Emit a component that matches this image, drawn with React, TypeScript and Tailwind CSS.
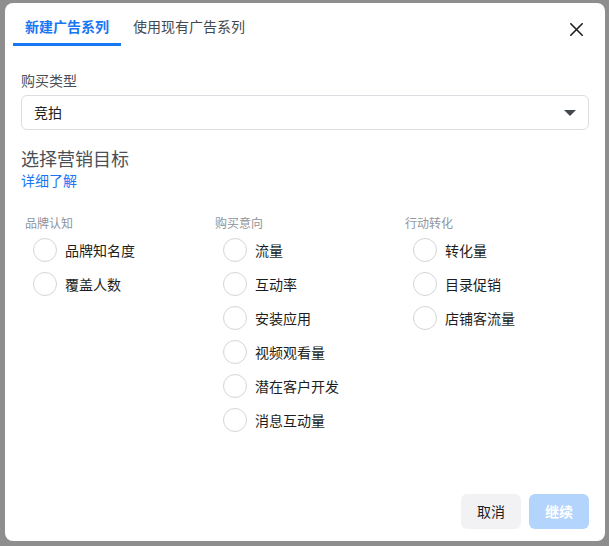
import React from "react";

const font = { fontFamily: '"Noto Sans CJK SC", "Noto Sans", "Liberation Sans", sans-serif' };

type Col = { title: string; items: string[] };

const cols: Col[] = [
  { title: "品牌认知", items: ["品牌知名度", "覆盖人数"] },
  { title: "购买意向", items: ["流量", "互动率", "安装应用", "视频观看量", "潜在客户开发", "消息互动量"] },
  { title: "行动转化", items: ["转化量", "目录促销", "店铺客流量"] },
];

export default function App() {
  return (
    <div className="w-[609px] h-[546px] bg-[#8e8e8e] pt-[3px] pl-[5px] overflow-hidden" style={font}>
      <div className="w-[600px] h-[538px] bg-white rounded-[8px] flex flex-col">
        {/* header */}
        <div className="flex h-[43px] pl-[8px] pr-[22px]">
          <div className="h-[43px] px-3 pt-[6px] flex items-center border-b-[3px] border-[#1877f2] text-[14px] font-bold text-[#1877f2]">
            新建广告系列
          </div>
          <div className="h-[43px] px-3 pt-[6px] flex items-center border-b-[3px] border-transparent text-[14px] text-[#444950]">
            使用现有广告系列
          </div>
          <div className="ml-auto h-[43px] pt-[9px] flex items-center">
            <svg width="13" height="13" viewBox="0 0 13 13">
              <path d="M0.8 0.8 L12.2 12.2 M12.2 0.8 L0.8 12.2" stroke="#1c1e21" strokeWidth="1.6" strokeLinecap="round" />
            </svg>
          </div>
        </div>

        {/* body */}
        <div className="px-4">
          <div className="mt-[24px] h-[20px] leading-[20px] text-[14px] text-[#4b4f56]">购买类型</div>
          <div className="mt-[5px] h-[35px] border border-[#dadde1] rounded-[6px] flex items-center pl-[12px] pr-[12px]">
            <span className="text-[14px] text-[#1c1e21] -mt-[1px]">竞拍</span>
            <svg className="ml-auto" width="12" height="6" viewBox="0 0 12 6">
              <path d="M0 0 H12 L6 6 Z" fill="#444950" />
            </svg>
          </div>
          <div className="mt-[16px] text-[18px] leading-[24px] text-[#4b4f56]">选择营销目标</div>
          <div className="text-[14px] leading-[20px] text-[#1877f2]">详细了解</div>
        </div>

        <div className="pl-[20px] mt-[25px] grid grid-cols-[190px_190px_190px]">
          {cols.map((c) => (
            <div key={c.title} className="flex flex-col">
              <div className="text-[12px] leading-[16px] text-[#90949c]">{c.title}</div>
              <div className="mt-[2px] flex flex-col">
                {c.items.map((it) => (
                  <div key={it} className="h-[34px] flex items-center pl-[8px] gap-[8px]">
                    <div className="w-[24px] h-[24px] rounded-full border border-[#d3d5d9] bg-white" />
                    <span className="text-[14px] text-[#1c1e21]">{it}</span>
                  </div>
                ))}
              </div>
            </div>
          ))}
        </div>

        {/* footer */}
        <div className="mt-auto flex justify-end gap-2 px-4 pb-[12px]">
          <button className="w-[60px] h-[35px] rounded-[6px] bg-[#f2f2f5] text-[14px] text-[#1c1e21]">取消</button>
          <button className="w-[60px] h-[35px] rounded-[6px] bg-[#b3d4fc] text-[14px] font-bold text-white">继续</button>
        </div>
      </div>
    </div>
  );
}
